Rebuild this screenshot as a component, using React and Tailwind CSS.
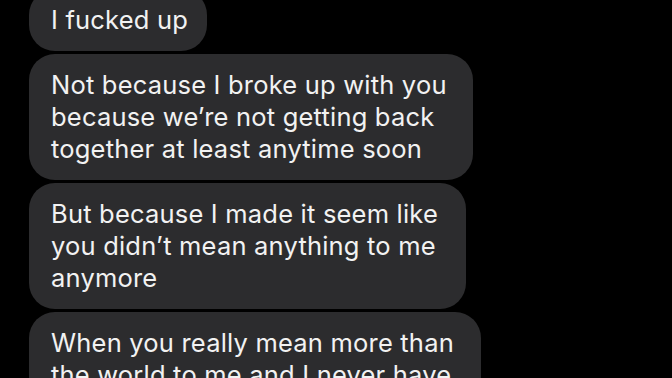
const messages = [
  { w: 'w-[178px]', lines: ['I fucked up'] },
  { w: 'w-[444px]', lines: ['Not because I broke up with you', 'because we’re not getting back', 'together at least anytime soon'] },
  { w: 'w-[437px]', lines: ['But because I made it seem like', 'you didn’t mean anything to me', 'anymore'] },
  { w: 'w-[452px]', lines: ['When you really mean more than', 'the world to me and I never have'] },
]

export default function App() {
  return (
    <div className="w-[672px] h-[378px] overflow-hidden bg-black font-['Inter',sans-serif]">
      <div className="flex flex-col gap-[3px] pl-[29px] -mt-[11px]">
        {messages.map((m, i) => (
          <div
            key={i}
            className={`${m.w} rounded-[26px] bg-[#2c2c2e] pl-[22px] pr-4 py-[15px] text-[25.5px] leading-[32px] tracking-[0.2px] text-[#f2f2f2]`}
          >
            {m.lines.map((l, j) => (
              <div key={j} className="whitespace-nowrap">{l}</div>
            ))}
          </div>
        ))}
      </div>
    </div>
  )
}
